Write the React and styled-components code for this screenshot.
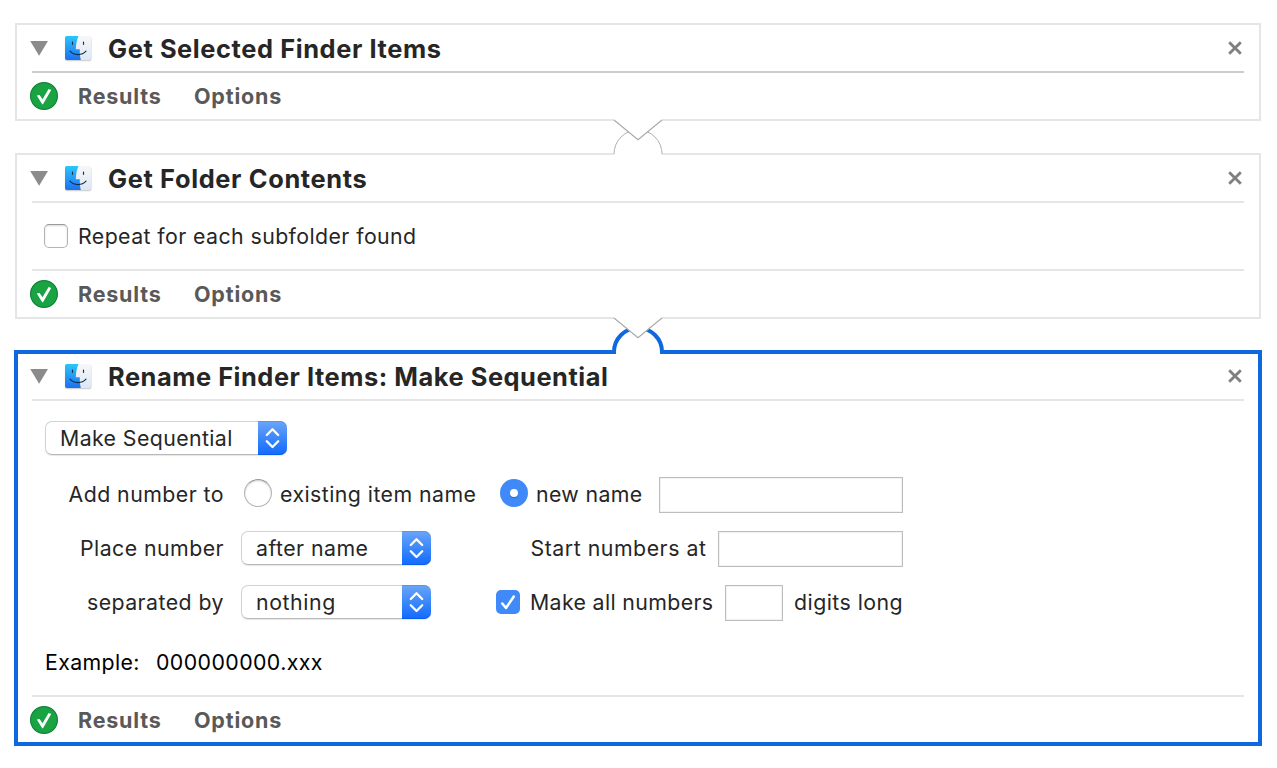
import React from 'react';
import styled, { createGlobalStyle } from 'styled-components';

const GlobalStyle = createGlobalStyle`
  * { box-sizing: border-box; }
  body {
    margin: 0;
    background: #fff;
    color: #262626;
    font-family: Inter, "Liberation Sans", sans-serif;
    font-size: 21.3px;
    letter-spacing: 0.45px;
    line-height: 30px;
  }
`;

const Workflow = styled.main`
  display: flex;
  flex-direction: column;
  width: 1277px;
  height: 768px;
  padding: 23px 0 0 14px;
  overflow: hidden;
`;

const Card = styled.section`
  position: relative;
  display: flex;
  flex-direction: column;
  flex: none;
  background: #fff;
  width: ${(p) => (p.$selected ? 1248 : 1246)}px;
  height: ${(p) => p.$height}px;
  margin: 0 0 ${(p) => p.$gap || 0}px ${(p) => (p.$selected ? 0 : 1)}px;
  border: ${(p) => (p.$selected ? '4px solid #1068df' : '2px solid #e5e5e5')};
  padding: 0 ${(p) => (p.$selected ? 14 : 15)}px 0 ${(p) => (p.$selected ? 12 : 13)}px;
`;

const Header = styled.header`
  display: flex;
  align-items: center;
  flex: none;
  height: 46px;
  margin-top: ${(p) => (p.$selected ? -1 : 0)}px;
`;

const Title = styled.h2`
  flex: 1;
  margin: 0 0 0 15px;
  padding-top: 2px;
  font-size: 25.4px;
  font-weight: 700;
  letter-spacing: ${(p) => p.$track}px;
  white-space: nowrap;
`;

const Disclosure = styled.svg`
  width: 18px;
  height: 16px;
  margin-right: 15px;
  flex: none;
`;

const FinderSvg = styled.svg`
  width: 30px;
  height: 30px;
  flex: none;
`;

const CloseSvg = styled.svg`
  width: 14px;
  height: 14px;
  margin-right: 2px;
  flex: none;
`;

const Divider = styled.div`
  flex: none;
  height: 2px;
  margin-left: 2px;
  background: ${(p) => (p.$dark ? '#cdcdcd' : '#e5e5e5')};
`;

const Footer = styled.footer`
  display: flex;
  align-items: center;
  flex: none;
  height: 46px;
  margin-bottom: ${(p) => (p.$selected ? -1 : 0)}px;
`;

const StatusSvg = styled.svg`
  width: 28px;
  height: 28px;
  margin-right: 20px;
`;

const FooterTab = styled.span`
  width: 116px;
  margin-top: -1px;
  color: #595959;
  font-size: 21.5px;
  font-weight: 700;
  letter-spacing: 0.8px;
`;

const Body = styled.div`
  display: flex;
  flex-direction: column;
  flex: 1;
  padding: ${(p) => p.$pad};
`;

const Text = styled.span`
  flex: none;
  width: ${(p) => (p.$width ? `${p.$width}px` : 'auto')};
  text-align: ${(p) => (p.$right ? 'right' : 'left')};
  letter-spacing: ${(p) => p.$track ?? 0.45}px;
  color: ${(p) => (p.$black ? '#000' : 'inherit')};
  white-space: nowrap;
`;

const Row = styled.div`
  display: flex;
  align-items: center;
  flex: none;
  height: 36px;
  margin-top: ${(p) => p.$top || 0}px;

  & > ${Text} {
    margin-top: ${(p) => (p.$raised ? -2 : 0)}px;
  }
`;

const Popup = styled.div`
  display: flex;
  align-items: center;
  justify-content: space-between;
  flex: none;
  width: ${(p) => p.$width}px;
  height: 34px;
  margin: -2px ${(p) => p.$after || 0}px 0 0;
  padding-left: 14px;
  border: 1px solid #d2d2d2;
  border-bottom-color: #b9b9b9;
  border-right: 0;
  border-radius: 7px;
  box-shadow: 0 1px 1px rgba(0, 0, 0, 0.1);
`;

const Stepper = styled.span`
  display: flex;
  flex: none;
  width: 29px;
  height: 34px;
  margin: -1px 0;
  border-radius: 0 7px 7px 0;
  background: linear-gradient(#6ba5f8, #3c88fb 50%, #116aff);
  box-shadow: inset 0 1px 0 rgba(60, 120, 220, 0.35), inset 0 -1px 0 rgba(0, 70, 200, 0.35);
`;

const Radio = styled.span`
  display: flex;
  align-items: center;
  justify-content: center;
  flex: none;
  width: 28px;
  height: 28px;
  margin: -4px 8px 0 0;
  border-radius: 50%;
  border: ${(p) => (p.$on ? '0' : '1px solid #b3b3b3')};
  border-top-color: #989898;
  background: ${(p) => (p.$on ? '#3f8af8' : '#fff')};
  box-shadow: ${(p) => (p.$on ? 'none' : 'inset 0 1px 2px rgba(0, 0, 0, 0.2)')};

  &::after {
    content: '';
    width: 8px;
    height: 8px;
    border-radius: 50%;
    background: #fff;
    box-shadow: ${(p) => (p.$on ? '0 1px 1px rgba(0, 50, 140, 0.35)' : 'none')};
  }
`;

const Checkbox = styled.span`
  display: flex;
  flex: none;
  width: 24px;
  height: 24px;
  margin: ${(p) => (p.$on ? -2 : 0)}px 10px 0 0;
  border-radius: 5px;
  border: ${(p) => (p.$on ? '0' : '1px solid #b4b4b4')};
  border-top-color: #9a9a9a;
  background: ${(p) => (p.$on ? '#3f8af8' : '#fff')};
  box-shadow: ${(p) => (p.$on ? 'none' : 'inset 0 1px 2px rgba(0, 0, 0, 0.15)')};
`;

const Field = styled.span`
  flex: none;
  width: ${(p) => p.$width}px;
  height: 36px;
  margin-right: ${(p) => p.$after || 0}px;
  border: 1px solid #bdbdbd;
  background: #fff;
  box-shadow: inset 0 0 0 1px #f2f2f2;
`;

const LinkSvg = styled.svg`
  position: absolute;
  left: ${(p) => (p.$selected ? 592 : 593)}px;
  top: ${(p) => (p.$selected ? -38 : -37)}px;
  width: 56px;
  height: 40px;
`;

/* The socket rising from a card, with the arrow of the card above over it. */
function Connector({ selected }) {
  return (
    <LinkSvg viewBox="610 118 56 40" $selected={selected}>
      {selected ? (
        <>
          <path d="M615.5 157V154a22.5 22.5 0 0 1 45 0V157Z" fill="#fff" />
          <path d="M614 156V154A24 24 0 0 1 662 154V156" fill="none" stroke="#1068df" strokeWidth="4" />
        </>
      ) : (
        <>
          <path d="M614 156V154A24 24 0 0 1 662 154V156Z" fill="#fff" />
          <path d="M614 154A24 24 0 0 1 662 154" fill="none" stroke="#b0b0b0" strokeWidth="1" />
        </>
      )}
      <path d="M614 118V120L638 139.700L662 120V118Z" fill="#fff" />
      <path d="M614 120L638 139.700L662 120" fill="none" stroke="#a9a9a9" strokeWidth="1.100" />
    </LinkSvg>
  );
}

function FinderIcon() {
  return (
    <FinderSvg viewBox="0 0 30 30">
      <defs>
        <linearGradient id="face" x1="0" y1="0" x2="0" y2="1">
          <stop offset="0" stopColor="#2bc6fb" />
          <stop offset="1" stopColor="#1e70f1" />
        </linearGradient>
        <linearGradient id="side" x1="0" y1="0" x2="0" y2="1">
          <stop offset="0" stopColor="#f7f7f8" />
          <stop offset="1" stopColor="#dce7f5" />
        </linearGradient>
      </defs>
      <rect x="1.800" y="3.800" width="26.800" height="24.600" rx="2.200" fill="#000" opacity="0.09" />
      <rect x="2" y="3.500" width="26.400" height="24.200" rx="2" fill="#000" opacity="0.12" />
      <rect x="2" y="3" width="26.200" height="24" rx="1.800" fill="url(#side)" />
      <path d="M3.800 3H15.500C13.800 7 13 11.500 12.800 16.300H16.800C16.700 20.500 17 23.800 17.800 27H3.800A1.800 1.800 0 0 1 2 25.200V4.800A1.800 1.800 0 0 1 3.800 3Z" fill="url(#face)" />
      <path d="M9.500 9.200V11.300M20.500 9.200V11.300" stroke="#17324f" strokeWidth="1.200" strokeLinecap="round" />
      <path d="M7 18.200C11 22.700 19 22.700 23 18.200" fill="none" stroke="#142c45" strokeWidth="1.200" strokeLinecap="round" />
    </FinderSvg>
  );
}

function CardHeader({ title, track, selected }) {
  return (
    <Header $selected={selected}>
      <Disclosure viewBox="0 0 18 16">
        <path d="M0.200 1H18L9.100 15.800Z" fill="#8b8b8b" />
      </Disclosure>
      <FinderIcon />
      <Title $track={track}>{title}</Title>
      <CloseSvg viewBox="0 0 14 14">
        <path d="M1.200 1.200L12.800 12.800M12.800 1.200L1.200 12.800" stroke="#7f7f7f" strokeWidth="2.800" />
      </CloseSvg>
    </Header>
  );
}

function CardFooter({ selected }) {
  return (
    <Footer $selected={selected}>
      <StatusSvg viewBox="0 0 28 28">
        <circle cx="14" cy="14" r="13.400" fill="#1aa342" stroke="#12853a" strokeWidth="1.200" />
        <path d="M6.800 13.600L9.600 13L12.500 17.200L18.600 6.900L21.200 8.100L13 22.200H12.200Z" fill="#fff" />
      </StatusSvg>
      <FooterTab>Results</FooterTab>
      <FooterTab>Options</FooterTab>
    </Footer>
  );
}

function PopupMenu({ label, width, after, track }) {
  return (
    <Popup $width={width} $after={after}>
      <Text $track={track}>{label}</Text>
      <Stepper>
        <svg width="29" height="34" viewBox="0 0 29 34" fill="none" stroke="#fff" strokeWidth="2.300" strokeLinecap="round" strokeLinejoin="round">
          <path d="M8.800 14L14.500 8.200L20.200 14M8.800 20.200L14.500 26L20.200 20.200" />
        </svg>
      </Stepper>
    </Popup>
  );
}

export default function App() {
  return (
    <>
      <GlobalStyle />
      <Workflow>
        <Card $height={98} $gap={32}>
          <CardHeader title="Get Selected Finder Items" track={0.6} />
          <Divider $dark />
          <CardFooter />
        </Card>

        <Card $height={166} $gap={31}>
          <Connector />
          <CardHeader title="Get Folder Contents" track={0.65} />
          <Divider />
          <Body $pad="15px 0 0 14px">
            <Row>
              <Checkbox />
              <Text $track={0.42}>Repeat for each subfolder found</Text>
            </Row>
          </Body>
          <Divider />
          <CardFooter />
        </Card>

        <Card $height={396} $selected>
          <Connector selected />
          <CardHeader title="Rename Finder Items: Make Sequential" track={0.54} selected />
          <Divider />
          <Body $pad="20px 0 0 15px">
            <Row>
              <PopupMenu label="Make Sequential" width={242} track={0.4} />
            </Row>
            <Row $top={20} $raised>
              <Text $width={179} $right>Add number to</Text>
              <Text $width={20} />
              <Radio />
              <Text $width={220} $track={0.45}>existing item name</Text>
              <Radio $on />
              <Text $width={123} $track={0.37}>new name</Text>
              <Field $width={244} />
            </Row>
            <Row $top={18} $raised>
              <Text $width={179} $right>Place number</Text>
              <Text $width={17} />
              <PopupMenu label="after name" width={190} after={99.500} />
              <Text $width={187.500} $track={0.53}>Start numbers at</Text>
              <Field $width={185} />
            </Row>
            <Row $top={18} $raised>
              <Text $width={179} $right>separated by</Text>
              <Text $width={17} />
              <PopupMenu label="nothing" width={190} after={65} track={0.6} />
              <Checkbox $on>
                <svg width="24" height="24" viewBox="0 0 24 24" fill="none">
                  <path d="M6.300 13.500L10 18L17.800 6.500" stroke="#fff" strokeWidth="2.500" strokeLinecap="round" strokeLinejoin="round" />
                </svg>
              </Checkbox>
              <Text $width={195} $track={0.36}>Make all numbers</Text>
              <Field $width={58} $after={11} />
              <Text $track={0.47}>digits long</Text>
            </Row>
            <Row $top={24} $raised>
              <Text $width={111} $track={0.38} $black>Example:</Text>
              <Text $track={0.42} $black>000000000.xxx</Text>
            </Row>
          </Body>
          <Divider />
          <CardFooter selected />
        </Card>
      </Workflow>
    </>
  );
}
